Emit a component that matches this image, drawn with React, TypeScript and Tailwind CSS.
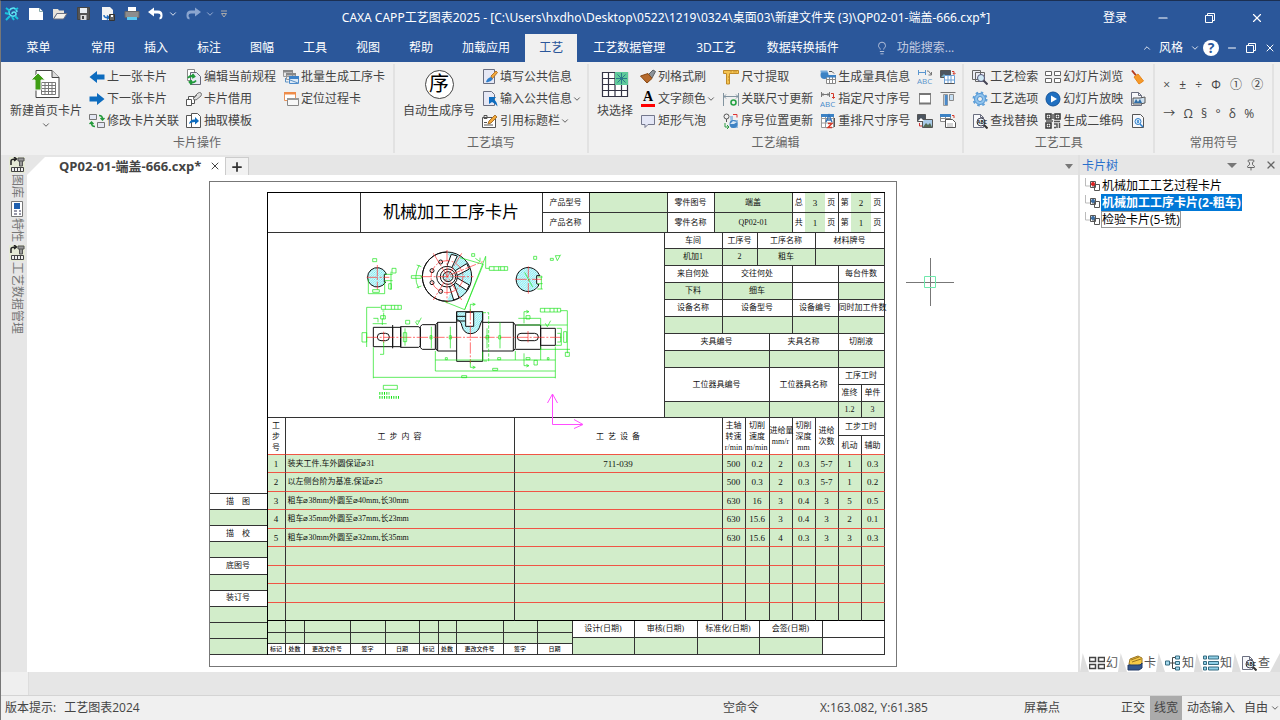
import type { ReactNode } from "react";
import { ChevronDown, ChevronUp, Lightbulb, Minus, Pin, Plus, X } from "lucide-react";

type IconProps = { children: ReactNode; size?: string; box?: string };

function Icon({ children, size = "size-4", box = "0 0 16 16" }: IconProps) {
  return (
    <svg className={`${size} shrink-0`} viewBox={box} fill="none" stroke="#555" strokeWidth="1" aria-hidden="true">
      {children}
    </svg>
  );
}

const Page = ({ x = 1, y = 1 }: { x?: number; y?: number }) => (
  <path d={`M${x + 0.5} ${y + 0.5}h7l3 3v10h-10z M${x + 7.5} ${y + 0.5}v3h3`} fill="#f7f8fb" stroke="#6b6f80" />
);

const Restore = () => (
  <Icon size="size-3" box="0 0 12 12">
    <path d="M1.5 3.5h7v7h-7z M3.5 3.5v-2h7v7h-2" stroke="#fff" />
  </Icon>
);

const icons = {
  left: <Icon><path d="M.5 8 8 2v3.5h7.5v5H8V14z" fill="#0d6cbf" stroke="none" /></Icon>,
  right: <Icon><path d="M15.500 8 8 2v3.500H.5v5H8V14z" fill="#0d6cbf" stroke="none" /></Icon>,
  link: (
    <Icon>
      <path d="M.5 1.500h7v5h-7z M8.500 9.500h7v5h-7z" fill="#e4e7f3" stroke="#777" />
      <path d="M10 2.500q3.500 0 3.500 3.500M11.500 5l2 2 2-2M6 13.500Q2.500 13.500 2.500 10M.5 11l2-2 2 2" stroke="#249a3c" strokeWidth="1.500" />
    </Icon>
  ),
  edit: (
    <Icon>
      <path d="M1.500.5h7v11h-7z" fill="#fff" stroke="#888" />
      <path d="M4.500 3.500h6l4 4v8h-10z" fill="#e8eaf4" stroke="#667" />
      <path d="M2 9q2-3 6-1.500M6.500 5 8.500 7.500 6 9M10 11.500q-2 3-6 1.500M5.500 15.500 3.500 13 6 11.500" stroke="#1f9a3a" strokeWidth="1.800" />
    </Icon>
  ),
  borrow: (
    <Icon>
      <path d="M.5 8.500h5v6h-5z M2.500 8V5.500h6v7H6" fill="#fff" />
      <path d="m7 7 5-5q2-1 3 0t0 3l-5 4-3-1 4-4" fill="#ddd" stroke="#777" />
    </Icon>
  ),
  extract: (
    <Icon>
      <path d="M.5 2.500h7v12h-7z" fill="#fff" />
      <path d="M5.500.5h6l3 3v11h-9z" fill="#fff" />
      <path d="M3 11q1-5 6-4.500V4l4 4-4 3.500V9Q5 9 3 11z" fill="#0d6cbf" stroke="none" />
    </Icon>
  ),
  batch: (
    <Icon>
      <path d="M.5 1.500h9v6h-9z M3.500 4.500h9v6h-9z" fill="#e8e8e8" stroke="#999" />
      <path d="M0 1h10v2.500H0z M3 4h10v2.500H3z" fill="#888" stroke="none" />
      <path d="M6.500 7.500h9v7h-9z" fill="#dce9f6" stroke="#4f8ccb" />
      <path d="M6 7h10v3H6z" fill="#3d82c8" stroke="none" />
      <path d="M7 11 15 14M2.500 9v4h3" stroke="#5c92c4" />
    </Icon>
  ),
  locate: (
    <Icon>
      <path d="M1.500 1.500h11v8h-11z" fill="#fff" stroke="#e8925a" />
      <path d="M1 1h12v2.500H1z" fill="#ee8c4a" stroke="none" />
      <path d="M4.500 7.500h11v7h-11z" fill="#f8f8f8" stroke="#888" />
      <path d="M4 7h12v2H4z" fill="#999" stroke="none" />
    </Icon>
  ),
  fill: (
    <Icon>
      <path d="M1.500.5h11v14h-11z" fill="#e6e8f5" stroke="#6b6f80" />
      <path d="M9 7 14 2l1.500 1.500L10 10z" fill="#f2a93b" stroke="#b5742b" />
      <path d="M4 13q1-4 5-5l2 2q-3 4-7 3z" fill="#2f7fcc" stroke="none" />
    </Icon>
  ),
  input: (
    <Icon>
      <path d="M1.500.5h8l3 3v11h-11z" fill="#e6e8f5" stroke="#6b6f80" />
      <path d="M7 6h7l-2 2.500q3 2 3.500 7-2.500-3.500-5.500-4.500L7 13z" fill="#0d6cbf" stroke="none" />
    </Icon>
  ),
  quote: (
    <Icon>
      <path d="M.5 4.500h13v10H.5z" fill="#fff" />
      <path d="M2 2.500h3v3H2z M2 12h9M2 9.500h3" />
      <path d="m6 11 1-3 6-6 2 2-6 6z" fill="#f2a93b" stroke="#a87430" />
    </Icon>
  ),
  brush: (
    <Icon>
      <path d="m8 6 5-5 2.500 1.500L12 9z" fill="#8b9299" stroke="#596066" />
      <path d="M.5 7 8 4.500l4 5L7 14z" fill="#b66a2c" stroke="#874712" />
    </Icon>
  ),
  bubble: (
    <Icon><path d="M1.500 2.500h13v9H8l-3 3v-3H1.500z" fill="#e4e7f6" stroke="#73778c" /></Icon>
  ),
  ruler: (
    <Icon>
      <path d="M.5 1.500h15v3h-9v10.500h-3V4.500h-3z" fill="#f5c451" stroke="#c08a28" />
      <path d="M8 2v1.500M11 2v1.500M13 2v1.500M5 8h1M5 11h1" stroke="#c08a28" />
    </Icon>
  ),
  assoc: (
    <Icon>
      <path d="M.5 2v13M15.500 2v13M1 5.500h14M3 3.500l-2 2 2 2M13 3.500l2 2-2 2" stroke="#8294a0" />
      <circle cx="10.500" cy="11.500" r="2.500" stroke="#25a244" strokeWidth="1.600" />
    </Icon>
  ),
  posUpdate: (
    <Icon>
      <circle cx="3.500" cy="3.500" r="2.500" stroke="#555" />
      <path d="M3.500 6v3" />
      <path d="M7 3h3v4h5v8H8z" fill="#9bbfe0" stroke="none" />
      <circle cx="10.500" cy="11" r="4" fill="#3f83c4" stroke="none" />
      <path d="m7 11 3-3 4 1-3 2z" fill="#d5e6f5" stroke="none" />
      <path d="M2 10v4h4M4 12l2 2-2 2" stroke="#2a9d43" />
      <path d="M10 1.500h4v3" stroke="#d33" />
    </Icon>
  ),
  gauge: (
    <Icon>
      <circle cx="4.500" cy="6" r="4" fill="#3c82c4" stroke="none" />
      <path d="M.5 1.500h7v2h-7z" fill="#75aadb" stroke="none" />
      <path d="M6.500 6.500h9v8h-9z M6.500 10.500h9M9.500 6.500v8M12.500 6.500v8" fill="#fff" stroke="#888" />
      <path d="M6 6h10v2.500H6z" fill="#3c82c4" stroke="none" />
      <path d="M9 2.500h3l2 2" />
    </Icon>
  ),
  assign: (
    <Icon>
      <path d="M1.500 1v5M9.500 1v5M2 3.500h7M3.500 2 2 3.500 3.500 5M7.500 2 9 3.500 7.500 5" stroke="#777" />
      <path d="M11 2.500h2.500V7M12 6l1.500 1.500L15 6" stroke="#d43a2a" />
      <text x="0" y="15.500" fontSize="8" fill="#4a8acb" stroke="none">ABC</text>
    </Icon>
  ),
  resort: (
    <Icon>
      <path d="M1.500 1.500h12v13h-12z M1.500 5.500h12M1.500 10h12M5.500 2v12" fill="#fff" stroke="#999" />
      <path d="M1 1h13v3H1z" fill="#3c82c4" stroke="none" />
      <path d="m6 9 3-7 3 7M7 7h4" stroke="#3474b8" strokeWidth="1.400" />
      <path d="M8 10.500h4l-4 4h4" stroke="#d43a2a" strokeWidth="1.400" />
      <path d="M14.500 5v9" stroke="#555" />
    </Icon>
  ),
  abc: (
    <Icon>
      <path d="M1.500 1v5M8.500 1v5M2 3.500h6" stroke="#5b96cf" />
      <path d="M10 2h1.500l3 4M14.500 3v3h-3" stroke="#777" />
      <text x="0" y="15" fontSize="8" fill="#5a94cc" stroke="none">ABC</text>
    </Icon>
  ),
  frame: <Icon><path d="M2.500 2.500h11v10h-11z" fill="#fff" stroke="#888" /><path d="M2 2h12v2H2z M2 11.500h12v2H2z" fill="#777" stroke="none" /></Icon>,
  swapA: (
    <Icon>
      <path d="M.5 1.500h10v7H.5z" fill="#4c5560" />
      <path d="M1 8l3-3 3 3z" fill="#7ab" stroke="none" />
      <path d="M4.500 6.500h10v8h-10z M4.500 11h10M8 6.500v8M11 6.500v8" fill="#fff" stroke="#6a9fd6" />
      <path d="M12 2.500h2V5M13 4l1 1.500L15.500 4" stroke="#d43a2a" />
      <path d="M4.500 14.500h10" />
    </Icon>
  ),
  swapB: (
    <Icon>
      <path d="M.5 1.500h8v7h-8z" fill="#4c5560" />
      <path d="M5.500 6.500h10v8h-10z" fill="#a8cbe8" />
      <path d="m6 14 3-4 2 2 2-2 2 4z" fill="#556b55" stroke="none" />
      <path d="M1 8l3-3 3 3z" fill="#fff" stroke="none" />
      <path d="M2.500 10v3H5" stroke="#c33" />
    </Icon>
  ),
  swapC: (
    <Icon>
      <path d="M.5 1.500h10v7H.5z M.5 5.500h10M5.500 2v6" fill="#fff" stroke="#888" />
      <path d="M0 1h11v3H0z" fill="#3c82c4" stroke="none" />
      <path d="M5.500 6.500h7l3 3v5h-10z" fill="#fff" />
      <path d="M7 11h6M7 13h6" stroke="#aaa" />
      <path d="M12 2.500h2V5" stroke="#d43a2a" />
    </Icon>
  ),
  align: (
    <Icon>
      <path d="M.5 1.500h15" stroke="#777" />
      <path d="M3.500 3.500h4v11h-4z" fill="#b9c6d2" stroke="#999" />
      <path d="M5 4h2.500v10H5z" fill="#4a8acb" stroke="none" />
      <path d="M9.500 3.500h4v6h-4z" fill="#c7dff3" stroke="#8b8b8b" />
    </Icon>
  ),
  search: (
    <Icon>
      <path d="M.5 1.500h8v9h-8z M3.500 3.500h9v9h-9z" fill="#eceef6" stroke="#666" />
      <circle cx="9" cy="9" r="3.500" fill="#cfe8f5" stroke="#557" />
      <path d="m11.500 11.500 4 4" stroke="#445" strokeWidth="2" />
    </Icon>
  ),
  gear: (
    <Icon>
      <circle cx="8" cy="8" r="5.500" fill="#8fc3ee" stroke="#4f93d1" />
      <circle cx="8" cy="8" r="6.500" stroke="#5f9fd8" strokeWidth="2" strokeDasharray="2.500 2.600" />
      <circle cx="8" cy="8" r="2.500" fill="#f0f0f0" stroke="#4f93d1" />
    </Icon>
  ),
  find: (
    <Icon>
      <Page />
      <circle cx="9" cy="9" r="4" fill="#eaf3f8" stroke="#445" />
      <text x="5" y="11" fontSize="5" fontWeight="bold" fill="#222" stroke="none">ABC</text>
      <path d="m12 12 3.500 3.500" stroke="#333" strokeWidth="2" />
    </Icon>
  ),
  tiles: <Icon><path d="M.5 2.500h6v4h-6z M9.500 2.500h6v4h-6z M.5 9.500h6v4h-6z M9.500 9.500h6v4h-6z" fill="#fff" stroke="#666" /></Icon>,
  play: <Icon><circle cx="8" cy="8" r="7" fill="#1f6fc0" stroke="#13539a" /><path d="m6 4.500 6 3.500-6 3.500z" fill="#fff" stroke="none" /></Icon>,
  qr: (
    <Icon>
      <path d="M1 1h5v5H1z M10 1h5v5h-5z M1 10h5v5H1z" stroke="#333" strokeWidth="1.500" />
      <path d="M3 3h1v1H3z M12 3h1v1h-1z M3 12h1v1H3z" stroke="#333" />
      <path d="M8 1v5M8 8H1M9 8.500h6M9 11h3v4M14.500 10v5M9 14.500h2" stroke="#555" strokeWidth="1.500" />
    </Icon>
  ),
  broom: (
    <Icon>
      <path d="m2 1.500 4 5" stroke="#b33a1e" strokeWidth="2" />
      <path d="m4 8 4-3 5.500 7-4.500 3z" fill="#f59a2a" stroke="#e8861a" />
    </Icon>
  ),
  pageImg: (
    <Icon>
      <Page x={1} y={1} />
      <path d="M3 7h7l5-1v6l-5 1H3z" fill="#cfe0ee" stroke="#555" />
      <path d="m4 12 2-4 2 3 2-3 2 4z" fill="#2f6ea8" stroke="none" />
    </Icon>
  ),
  pageFind: (
    <Icon>
      <path d="M2.500 1.500h8l3 3v10h-11z" fill="#f7f8fb" />
      <circle cx="8" cy="8.500" r="3" fill="#dcecf8" stroke="#2f7fcc" />
      <path d="M8 7v3M10 11l3 3" stroke="#2f7fcc" strokeWidth="1.500" />
    </Icon>
  ),
};

const fontColor = (
  <span className="flex size-4 shrink-0 flex-col items-center justify-end">
    <span className="font-['Liberation_Serif',serif] text-[14px] leading-3 font-bold text-black">A</span>
    <span className="mt-px h-[3px] w-3.5 bg-[#f00]" />
  </span>
);

function Tool({ icon, label, menu }: { icon: ReactNode; label: string; menu?: boolean }) {
  return (
    <button className="flex h-[22px] items-center whitespace-nowrap">
      {icon}
      <span className="pl-0.5">{label}</span>
      {menu && <ChevronDown className="size-2.5 shrink-0" />}
    </button>
  );
}

function IconTool({ icon, label }: { icon: ReactNode; label: string }) {
  return (
    <button className="flex h-[22px] items-center" aria-label={label}>
      {icon}
    </button>
  );
}

function Group({ label, pad = "px-2", children }: { label: string; pad?: string; children: ReactNode }) {
  return (
    <section className="my-0.5 flex flex-col border-r-2 border-[#e2e2e2] pt-0.5">
      <div className={`flex h-[66px] shrink-0 items-start gap-[7px] ${pad}`}>{children}</div>
      <h2 className="text-center leading-[22px] text-[#666]">{label}</h2>
    </section>
  );
}

const Col = ({ children }: { children: ReactNode }) => <div className="flex flex-col items-start">{children}</div>;

function BigTool({ icon, label, menu }: { icon: ReactNode; label: string; menu?: boolean }) {
  return (
    <button className="flex flex-col items-center whitespace-nowrap">
      <span className="flex h-9 items-center">{icon}</span>
      <span className="leading-[18px]">{label}</span>
      {menu && <ChevronDown className="size-2.5" />}
    </button>
  );
}

function QuickAccess() {
  return (
    <div className="flex items-center gap-2 pl-[3px]">
      <Icon>
        <path d="M8 8a2 2 0 1 1 2 2 4 4 0 1 1 3-4" stroke="#5fe6f5" strokeWidth="1.500" />
        <path d="M2 2 6 5M1 7l4 1M2 14l4-4M14 2l-3 2M10 14l-2-3M14 13l-3-3" stroke="#19c3dc" strokeWidth="2" />
      </Icon>
      <button aria-label="新建"><Icon><path d="M1 2h10.500L15 5.500V14H1z" fill="#fff" stroke="none" /><path d="M11.500 2v3.500H15" stroke="#8aa" /></Icon></button>
      <button aria-label="打开"><Icon><path d="M1 3h5l1 1.500h5V7H5l-4 6z" fill="#e7e3da" stroke="none" /><path d="M5 7.500h10L11.500 13H1.500z" fill="#f4f1ea" stroke="#6a7080" /></Icon></button>
      <button aria-label="保存"><Icon><path d="M1.500 1.500h12v12h-12z" fill="#555" stroke="#444" /><path d="M4 2h7v5H4z" fill="#e9eef2" stroke="none" /><path d="M4.500 9h6v5h-6z" fill="#ddd" stroke="none" /><path d="M6 10h2v3H6z" fill="#444" stroke="none" /></Icon></button>
      <button aria-label="另存为"><Icon><path d="M2 1h8l3 3v10H2z" fill="#f3f3f3" stroke="none" /><path d="M4 9q0 3 4 2.500M7 9.500l2 2-2 2" stroke="#1f6cbf" strokeWidth="1.500" /><path d="M9.500 8.500h5v6h-5z" fill="#666" stroke="#333" /><path d="M11 9h2v2h-2z" fill="#fff" stroke="none" /></Icon></button>
      <button aria-label="打印"><Icon><path d="M4 1h8v5H4z" fill="#fff" stroke="none" /><path d="M1 5.500h14v6H1z" fill="#8d8d8d" stroke="#666" /><path d="M3 11h10v3H3z" fill="#5cc8ee" stroke="none" /></Icon></button>
      <button aria-label="撤销"><Icon><path d="M0 6 6 1.500v3h4q4.500 0 4.500 4.500v1q0 3-3 3.500v-2q1-.5 1-2 0-2-2.500-2H6v3z" fill="#fff" stroke="none" /></Icon></button>
      <button aria-label="撤销列表" className="-ml-1"><ChevronDown className="size-2.5 text-white" /></button>
      <button aria-label="重做" className="-ml-px"><Icon><path d="M16 6l-6-4.500v3H6Q1.500 4.500 1.500 9v1q0 3 3 3.500v-2q-1-.5-1-2 0-2 2.500-2h4v3z" fill="#8ba5cf" stroke="none" /></Icon></button>
      <button aria-label="重做列表" className="-ml-1"><ChevronDown className="size-2.5 text-[#aabbdc]" /></button>
      <button aria-label="自定义" className="-ml-1"><Icon size="size-2.5" box="0 0 10 10"><path d="M2 2h6" stroke="#aaa" /><path d="M2.500 4.500h5L5 8z" stroke="#aaa" /></Icon></button>
    </div>
  );
}

function TitleBar() {
  return (
    <header className="flex h-[33px] items-center bg-[#2b579a] text-white">
      <div className="w-[240px] self-start pt-[5px]"><QuickAccess /></div>
      <h1 className="flex-1 text-center font-['Noto_Sans','Noto_Sans_CJK_SC',sans-serif] whitespace-nowrap">
        CAXA CAPP工艺图表2025 - [C:\Users\hxdho\Desktop\0522\1219\0324\桌面03\新建文件夹 (3)\QP02-01-端盖-666.cxp*]
      </h1>
      <button className="mx-3 w-6 whitespace-nowrap">登录</button>
      <button aria-label="最小化" className="flex w-[47px] justify-center"><Minus className="size-3.5" strokeWidth={2} /></button>
      <button aria-label="还原" className="flex w-[47px] justify-center"><Restore /></button>
      <button aria-label="关闭" className="flex w-[47px] justify-center"><X className="size-3.5" strokeWidth={2} /></button>
    </header>
  );
}

const tabs = [
  { label: "常用" },
  { label: "插入" },
  { label: "标注" },
  { label: "图幅" },
  { label: "工具" },
  { label: "视图" },
  { label: "帮助" },
  { label: "加载应用" },
  { label: "工艺", active: true },
  { label: "工艺数据管理", wide: true },
  { label: "3D工艺", wide: true },
  { label: "数据转换插件", wide: true },
];

function MenuBar() {
  return (
    <nav className="flex h-7 items-stretch gap-px bg-[#2b579a] text-white">
      <button className="w-[75px]">菜单</button>
      {tabs.map((tab) => (
        <button
          key={tab.label}
          className={`whitespace-nowrap ${tab.wide ? "px-[15px]" : "px-3.5"} ${tab.active ? "bg-[#f0f0f0] text-[#2b579a]" : ""}`}
        >
          {tab.label}
        </button>
      ))}
      <label className="ml-5 flex flex-1 items-center gap-2">
        <Lightbulb className="size-3.5 text-[#c3cbe0]" strokeWidth={1.5} />
        <input className="w-24 outline-none placeholder:text-[#c3cbe0]" placeholder="功能搜索..." aria-label="功能搜索" />
      </label>
      <div className="flex items-center gap-[7px] pr-1">
        <ChevronUp className="size-2.5" />
        <button className="flex items-center gap-[7px]">风格 <ChevronDown className="size-2.5" /></button>
        <button aria-label="帮助" className="-ml-1 size-4 rounded-full bg-white text-[14px] leading-4 font-bold text-[#2b579a]">?</button>
        <button aria-label="最小化文档"><Minus className="size-3" /></button>
        <button aria-label="还原文档"><Restore /></button>
        <button aria-label="关闭文档"><X className="size-3" /></button>
      </div>
    </nav>
  );
}

const symbolRows = [
  { width: "w-full", symbols: ["×", "±", "÷", "Φ", "①", "②"] },
  { width: "w-[91px]", symbols: ["→", "Ω", "§", "°", "δ", "%"] },
];

function Ribbon() {
  return (
    <div className="flex h-[93px] bg-[#f0f0f0] text-[#444]">
      <Group label="卡片操作" pad="pl-[9px] pr-2">
        <BigTool
          menu
          label="新建首页卡片"
          icon={
            <Icon size="size-8" box="0 0 32 32">
              <path d="M6 2.500h16l7 7v20H6z" fill="#fff" stroke="#444" />
              <path d="M22 2.500v7h7" fill="#ddd" stroke="#444" />
              <path d="M11.500 14.500h14v12h-14z M11.500 17.500h14M11.500 20.500h14M11.500 23.500h14M15 14.500v12M18.500 14.500v12M22 14.500v12" stroke="#777" />
              <path d="m8 5 7 7h-4v10H5V12H1z" fill="#3f9e14" stroke="#f0f0f0" />
            </Icon>
          }
        />
        <Col>
          <Tool icon={icons.left} label="上一张卡片" />
          <Tool icon={icons.right} label="下一张卡片" />
          <Tool icon={icons.link} label="修改卡片关联" />
        </Col>
        <Col>
          <Tool icon={icons.edit} label="编辑当前规程" />
          <Tool icon={icons.borrow} label="卡片借用" />
          <Tool icon={icons.extract} label="抽取模板" />
        </Col>
        <Col>
          <Tool icon={icons.batch} label="批量生成工序卡" />
          <Tool icon={icons.locate} label="定位过程卡" />
        </Col>
      </Group>
      <Group label="工艺填写" pad="pl-2 pr-[5px]">
        <BigTool
          label="自动生成序号"
          icon={<span className="flex size-[29px] items-center justify-center rounded-full border border-[#444] bg-white text-[20px] leading-none text-black">序</span>}
        />
        <Col>
          <Tool icon={icons.fill} label="填写公共信息" />
          <Tool icon={icons.input} label="输入公共信息" menu />
          <Tool icon={icons.quote} label="引用标题栏" menu />
        </Col>
      </Group>
      <Group label="工艺编辑" pad="pl-2 pr-1.5">
        <BigTool
          label="块选择"
          icon={
            <Icon size="size-7" box="0 0 28 28">
              <path d="M1.500 2.500h25v24h-25z M1.500 8.500h25M1.500 14.500h25M1.500 20.500h25M7.500 2.500v24M14 2.500v24M20.500 2.500v24" fill="#fff" stroke="#334" strokeWidth="1.200" />
              <path d="M14 2h13v13H14z" fill="#5fca9a" stroke="none" />
              <path d="M20.500 3v11M15 8.500h11M16.500 4.500l8 8M24.500 4.500l-8 8" stroke="#2a7a8a" />
            </Icon>
          }
        />
        <Col>
          <Tool icon={icons.brush} label="列格式刷" />
          <Tool icon={fontColor} label="文字颜色" menu />
          <Tool icon={icons.bubble} label="矩形气泡" />
        </Col>
        <Col>
          <Tool icon={icons.ruler} label="尺寸提取" />
          <Tool icon={icons.assoc} label="关联尺寸更新" />
          <Tool icon={icons.posUpdate} label="序号位置更新" />
        </Col>
        <Col>
          <Tool icon={icons.gauge} label="生成量具信息" />
          <Tool icon={icons.assign} label="指定尺寸序号" />
          <Tool icon={icons.resort} label="重排尺寸序号" />
        </Col>
        <Col>
          <IconTool icon={icons.abc} label="尺寸编号" />
          <IconTool icon={icons.frame} label="边框" />
          <IconTool icon={icons.swapB} label="替换图片" />
        </Col>
        <Col>
          <IconTool icon={icons.swapA} label="图片转表格" />
          <IconTool icon={icons.align} label="顶端对齐" />
          <IconTool icon={icons.swapC} label="表格转换" />
        </Col>
      </Group>
      <Group label="工艺工具" pad="pl-2 pr-[7px]">
        <Col>
          <Tool icon={icons.search} label="工艺检索" />
          <Tool icon={icons.gear} label="工艺选项" />
          <Tool icon={icons.find} label="查找替换" />
        </Col>
        <Col>
          <Tool icon={icons.tiles} label="幻灯片浏览" />
          <Tool icon={icons.play} label="幻灯片放映" />
          <Tool icon={icons.qr} label="生成二维码" />
        </Col>
        <Col>
          <IconTool icon={icons.broom} label="清理" />
          <IconTool icon={icons.pageImg} label="图片页" />
          <IconTool icon={icons.pageFind} label="页面预览" />
        </Col>
      </Group>
      <Group label="常用符号" pad="pl-2 pr-[9px]">
        <div className="flex w-[100px] flex-col pt-1">
          {symbolRows.map((row) => (
            <div key={row.width} className={`flex h-[29px] items-center justify-between ${row.width}`}>
              {row.symbols.map((s) => <button key={s}>{s}</button>)}
            </div>
          ))}
        </div>
      </Group>
    </div>
  );
}

const libraryIcon = (
  <Icon>
    <path d="M0 0h16v16H0z" fill="#e6ead6" stroke="none" />
    <path d="M2 8V4q0-2 5-2M5 0l2.500 2L5 4" stroke="#222" strokeWidth="1.500" />
    <path d="M9 1h6v3H9z M10.500 4v5h3V4" fill="#999" stroke="#555" />
    <path d="M2.500 10.500h12v4h-12z M5.500 11v4M8.500 11v4M11.500 11v4" fill="#eee" stroke="#444" />
  </Icon>
);

const propsIcon = (
  <Icon>
    <path d="M2.500.5h11v15h-11z" fill="#fff" stroke="#777" />
    <path d="M5 2h6v6H5z" fill="#1f5fae" stroke="none" />
    <path d="M5 10h3M10 10h2M5 13h3M10 13h2" stroke="#99a" strokeWidth="2" />
  </Icon>
);

const dockItems = [
  { label: "图库", icon: libraryIcon },
  { label: "特性", icon: propsIcon },
  { label: "工艺数据管理", icon: libraryIcon },
];

function SideDock() {
  return (
    <aside className="flex w-[26px] shrink-0 flex-col items-end gap-[3px] pt-0.5 pr-0.5 text-[#777]">
      {dockItems.map((item) => (
        <button key={item.label} className="flex flex-col items-center gap-px">
          {item.icon}
          <span className="leading-4 [text-orientation:sideways] [writing-mode:vertical-rl]">{item.label}</span>
        </button>
      ))}
    </aside>
  );
}

type Cell = { t?: string; c?: number; r?: number; g?: boolean };

const cellBase = "border-r border-b border-[#333] p-0 text-center whitespace-pre";

function Row({ cells, className = "" }: { cells: Cell[]; className?: string }) {
  return (
    <tr className={className}>
      {cells.map((cell, i) => (
        <td key={i} colSpan={cell.c} rowSpan={cell.r} className={`${cellBase} ${cell.g ? "bg-[#d2edca]" : "bg-white"}`}>
          {cell.t}
        </td>
      ))}
    </tr>
  );
}

function PageCount({ left, value }: { left: string; value: string }) {
  return (
    <td className={cellBase}>
      <div className="flex h-[19px] items-center">
        <span className="flex-1">{left}</span>
        <span className="flex h-full w-5 items-center justify-center bg-[#d2edca] text-[9px]">{value}</span>
        <span className="flex-1">页</span>
      </div>
    </td>
  );
}

function CardHead() {
  return (
    <table className="w-full table-fixed border-separate border-spacing-0">
      <colgroup>
        <col className="w-[93px]" /><col className="w-[182px]" /><col className="w-[47px]" /><col className="w-[78px]" />
        <col className="w-[47px]" /><col className="w-[78px]" /><col className="w-[46px]" /><col className="w-[46px]" />
      </colgroup>
      <tbody>
        <tr className="h-5">
          <td rowSpan={2} className={cellBase} />
          <td rowSpan={2} className={`${cellBase} text-[17px] text-black`}>机械加工工序卡片</td>
          <td className={cellBase}>产品型号</td>
          <td className={`${cellBase} bg-[#d2edca]`} />
          <td className={cellBase}>零件图号</td>
          <td className={`${cellBase} bg-[#d2edca]`}>端盖</td>
          <PageCount left="总" value="3" />
          <PageCount left="第" value="2" />
        </tr>
        <tr className="h-5">
          <td className={cellBase}>产品名称</td>
          <td className={`${cellBase} bg-[#d2edca]`} />
          <td className={cellBase}>零件名称</td>
          <td className={`${cellBase} bg-[#d2edca]`}>QP02-01</td>
          <PageCount left="共" value="1" />
          <PageCount left="第" value="1" />
        </tr>
      </tbody>
    </table>
  );
}

const processRows: Cell[][] = [
  [{ t: "车间" }, { t: "工序号" }, { t: "工序名称", c: 3 }, { t: "材料牌号", c: 3 }],
  [{ t: "机加1", g: true }, { t: "2", g: true }, { t: "粗车", c: 3, g: true }, { c: 3, g: true }],
  [{ t: "来自何处" }, { t: "交往何处", c: 3 }, { c: 2 }, { t: "每台件数", c: 2 }],
  [{ t: "下料", g: true }, { t: "细车", c: 3, g: true }, { c: 2 }, { c: 2, g: true }],
  [{ t: "设备名称" }, { t: "设备型号", c: 3 }, { t: "设备编号", c: 2 }, { t: "同时加工件数", c: 2 }],
  [{ g: true }, { c: 3, g: true }, { c: 2, g: true }, { c: 2, g: true }],
  [{ t: "夹具编号", c: 3 }, { t: "夹具名称", c: 3 }, { t: "切削液", c: 2 }],
  [{ c: 3, g: true }, { c: 3, g: true }, { c: 2, g: true }],
  [{ t: "工位器具编号", c: 3, r: 2 }, { t: "工位器具名称", c: 3, r: 2 }, { t: "工序工时", c: 2 }],
  [{ t: "准终" }, { t: "单件" }],
  [{ c: 3, g: true }, { c: 3, g: true }, { t: "1.2", g: true }, { t: "3", g: true }],
];

function ProcessInfo() {
  return (
    <table className="w-[220px] shrink-0 table-fixed border-separate border-spacing-0">
      <colgroup>
        <col className="w-[58px]" /><col className="w-[35px]" /><col className="w-[12px]" /><col className="w-[23px]" />
        <col className="w-[23px]" /><col className="w-[23px]" /><col className="w-[23px]" /><col className="w-[23px]" />
      </colgroup>
      <tbody>
        {processRows.map((cells, i) => (
          <Row key={i} cells={cells} className="h-[17px] first:h-4 last:h-4" />
        ))}
      </tbody>
    </table>
  );
}

// Units in the drawing are thirds of a screen pixel.
function ShaftDrawing() {
  return (
    <svg className="h-[184px] w-full" viewBox="-246 144 1188 552" fill="none" strokeWidth="3">
      <defs>
        <pattern id="hatch" width="7" height="7" patternUnits="userSpaceOnUse">
          <path d="M0 0h7v7H0z" fill="#d4fafc" />
          <path d="M0 7 7 0" stroke="#5fdfe8" strokeWidth="2" />
        </pattern>
      </defs>

      <g stroke="#111" fill="url(#hatch)">
        <path d="M107 263A29 29 0 1 0 107 291L103 291V268H109z" />
        <path d="M567 268A36 36 0 1 0 567 299L560 296V272H570z" />
        <path d="M291 201A74 74 0 0 1 291 349L320 275z" stroke="none" />
        <path d="M320 380H398V404Q392 412 388 428Q380 446 361 446Q342 446 336 424Q333 406 320 404z" />
        <path d="M347 382H371V424H347z" fill="#fff" />
      </g>

      <g stroke="#111" fill="#fff">
        <path d="m304 208 18 5-20 42-14-5z M350 236l8 16-38 20-6-14z M358 300l-8 16-36-24 6-14z M327 339l-16 6-14-46 14-5z" />
        <path d="M291 201A74 74 0 0 0 291 349" />
        <circle cx="291" cy="275" r="74" fill="none" />
        <circle cx="291" cy="275" r="31" />
        <circle cx="294" cy="275" r="23" />
        <circle cx="294" cy="275" r="15" fill="url(#hatch)" />
        <circle cx="272" cy="231" r="6" /><circle cx="246" cy="257" r="6" />
        <circle cx="246" cy="293" r="6" /><circle cx="272" cy="319" r="6" />
      </g>

      <g stroke="#111">
        <path d="M70 427H128V485H70z M128 420V490M128 427H152V485H128M152 425H206L211 431V482L206 487H152z" />
        <path d="M211 424 217 419H256V493H217L211 488z M258 418 263 412H320M258 492 263 498H320M258 418V492M263 412V498" />
        <path d="M320 380V529H398V380M398 412H490L496 420V490L490 498H398M496 420H572V493H496M490 412V498M572 430H616V481H572z" />
        <path d="M93 445H107A11 11 0 0 1 107 467H93A11 11 0 0 1 93 445z M513 445H554A11 11 0 0 1 554 467H513A11 11 0 0 1 513 445z" />
        <path d="M320 394H346M320 408H346M152 425V487" />
      </g>

      <g stroke="#ff2a2a" strokeWidth="2" strokeDasharray="34 5 6 5">
        <path d="M50 457H640M361 372V535M82 240V314M50 277H118M535 244V326M496 283H575" />
        <path d="M291 195V355M212 275H370M250 205 335 345M335 205 250 345M300 270 398 230" />
        <circle cx="291" cy="275" r="48" />
        <path d="M101 440V474M534 438V476" />
      </g>

      <g stroke="#12e212" strokeWidth="2">
        <path d="M50 367H92M50 367V486M36 443H50V471H36z M94 361H154V373H94z M106 361V373M124 361V373M134 361V373M144 361V373" />
        <path d="M70 400H84M84 400V412M97 400V420M68 416H110M101 383V402M97 378h6M101 470V508H90M92 392h14v10H92z" />
        <path d="M167 406H179V417H167z M165 430V482M160 443H170V470H160z M196 410l6 10 12-22M198 408H208" />
        <path d="M244 425V490M301 425V490M240 452H246V462H240z M298 452H304V462H298z M411 430V490M450 412V490M408 452H416V462H408z M446 452H452V462H446z" />
        <path d="M398 383H416V528H398" strokeDasharray="10 4" />
        <path d="M256 498V558H616M616 485V580M70 487V580M70 577H616M256 525H498M398 500V525M496 498V525M572 485V525M498 525H616" />
        <path d="M335 572H350V578H335z M428 550H443V556H428z M286 518H292V524H286z M443 518H452V524H443z M528 518H540V524H528z M592 518H597V524H592z" />
        <path d="M361 378V358H374M368 354l8 4-8 4M361 530V547H374M368 543l8 4-8 4" />
        <path d="M522 415V380H535M529 376l8 4-8 4M522 505V542H535M529 538l8 4-8 4M505 400H572V418M502 420H652M528 392h12v10h-12z" />
        <path d="M571 370H632V381H571z M584 370V381M600 370V381M612 370V381M622 370V381M632 377H652V505M641 440H650V472H641zM620 430H634V481H616M622 445h10v26h-10" />
        <path d="M572 493H660M646 502H658V514H646z M586 415l6 10 10-18M552 526h10v14h-10z" />
        <path d="M68 221H80V230H68z M104 268H128M104 287H128M123 260V315M116 296H124V312H116z M126 250h12v14h-12zM55 282V326H104V290M68 314H88V322H68z" />
        <path d="M208 240Q188 276 206 310M184 272H214V280H184zM200 240l14 5M200 308l14-5M365 206H374V214H365z M376 220l14 10V218" />
        <path d="M330 218 400 238 344 374 284 350M407 214V250H418M344 374 407 214M418 245H473V256H418z M432 245V256M446 245V256M452 245V256M463 245V256" />
        <path d="M551 214H560V223H551z M601 220H610V226H601z M616 212l6 15 10-18M616 212H630M563 276H578M563 296H578M574 272V312M562 312H578M524 262 548 306" />
        <path d="M100 601H142V613H100z" />
      </g>
      <g stroke="#12e212">
        <path d="M88 625H118" strokeWidth="8" strokeDasharray="3 4" />
        <path d="M88 637H150" strokeWidth="8" strokeDasharray="3 4" />
      </g>
    </svg>
  );
}

const stepHeads = ["主轴\n转速\nr/min", "切削\n速度\nm/min", "进给量\nmm/r", "切削\n深度\nmm", "进给\n次数"];

const steps = [
  ["1", "装夹工件,车外圆保证⌀31", "711-039", "500", "0.2", "2", "0.3", "5-7", "1", "0.3"],
  ["2", "以左侧台阶为基准,保证⌀25", "", "500", "0.3", "2", "0.3", "5-7", "1", "0.2"],
  ["3", "粗车⌀38mm外圆至⌀40mm,长30mm", "", "630", "16", "3", "0.4", "3", "5", "0.5"],
  ["4", "粗车⌀35mm外圆至⌀37mm,长23mm", "", "630", "15.6", "3", "0.4", "3", "2", "0.1"],
  ["5", "粗车⌀30mm外圆至⌀32mm,长35mm", "", "630", "15.6", "4", "0.3", "3", "3", "0.3"],
  ...Array.from({ length: 4 }, () => Array<string>(10).fill("")),
];

function StepTable() {
  const head = "border-r border-b border-r-[#333] border-b-[#f05545] p-0 text-center font-normal leading-[11px] whitespace-pre";
  return (
    <table className="w-full table-fixed border-separate border-spacing-0">
      <colgroup>
        <col className="w-[18px]" /><col className="w-[229px]" /><col className="w-[208px]" /><col className="w-[23px]" /><col className="w-[24px]" />
        <col className="w-[23px]" /><col className="w-[23px]" /><col className="w-[23px]" /><col className="w-[23px]" /><col className="w-[23px]" />
      </colgroup>
      <thead>
        <tr className="h-[18px]">
          <th rowSpan={2} className={head}>{"工\n步\n号"}</th>
          <th rowSpan={2} className={head}>工  步  内  容</th>
          <th rowSpan={2} className={head}>工  艺  设  备</th>
          {stepHeads.map((h) => <th key={h} rowSpan={2} className={head}>{h}</th>)}
          <th colSpan={2} className={`${cellBase} font-normal`}>工步工时</th>
        </tr>
        <tr className="h-[19px]">
          <th className={head}>机动</th>
          <th className={head}>辅助</th>
        </tr>
      </thead>
      <tbody className="bg-[#d2edca]">
        {steps.map((step, i) => (
          <tr key={i} className="odd:h-[18px] even:h-[19px]">
            {step.map((value, j) => (
              <td
                key={j}
                className={`border-r border-b border-r-[#333] p-0 whitespace-nowrap ${i === steps.length - 1 ? "border-b-black" : "border-b-[#f05545]"} ${j === 1 ? "pl-0.5 text-left" : "text-center text-[9px]"}`}
              >
                {value}
              </td>
            ))}
          </tr>
        ))}
      </tbody>
    </table>
  );
}

const changeLabels = ["标记", "处数", "更改文件号", "签字", "日期"];
const blankChange: Cell[] = Array.from({ length: 10 }, () => ({ g: true }));
const signLabels = ["设计(日期)", "审核(日期)", "标准化(日期)", "会签(日期)", ""];

function CardFoot() {
  return (
    <div className="flex">
      <table className="w-[305px] shrink-0 table-fixed border-separate border-spacing-0 text-[6px] font-medium">
        <colgroup>
          <col className="w-[18px]" /><col className="w-[19px]" /><col className="w-[46px]" /><col className="w-[35px]" /><col className="w-[34px]" />
          <col className="w-[19px]" /><col className="w-[18px]" /><col className="w-[47px]" /><col className="w-[34px]" /><col className="w-[35px]" />
        </colgroup>
        <tbody>
          <Row className="h-3" cells={blankChange} />
          <Row className="h-[11px]" cells={blankChange} />
          <Row className="h-[11px]" cells={[...changeLabels, ...changeLabels].map((t) => ({ t }))} />
        </tbody>
      </table>
      <table className="w-[312px] table-fixed border-separate border-spacing-0">
        <colgroup>
          <col className="w-[62px]" /><col className="w-[63px]" /><col className="w-[62px]" /><col className="w-[63px]" /><col className="w-[62px]" />
        </colgroup>
        <tbody>
          <Row className="h-[17px]" cells={signLabels.map((t) => ({ t }))} />
          <Row className="h-[17px]" cells={signLabels.map((t) => ({ g: t !== "" }))} />
        </tbody>
      </table>
    </div>
  );
}

const archiveLabels = ["描    图", "", "描    校", "", "底图号", "", "装订号", "", "", ""];

function Sheet() {
  return (
    <div className="relative mx-auto mt-1.5 flex w-[688px] items-end border border-[#777] pt-2.5 pb-[11px] font-['Liberation_Serif','Noto_Sans_CJK_SC',serif] text-[8px] leading-[10px] text-[#111]">
      <div className="grid h-[162px] w-[57px] grid-rows-10 border-t border-[#333]">
        {archiveLabels.map((label, i) => (
          <div key={i} className={`flex items-center justify-center border-b border-[#333] whitespace-pre ${label ? "" : "bg-[#d2edca]"}`}>
            {label}
          </div>
        ))}
      </div>
      <div className="w-[618px] border-t border-l border-black">
        <CardHead />
        <div className="flex">
          <div className="flex-1 border-r border-b border-[#333]"><ShaftDrawing /></div>
          <ProcessInfo />
        </div>
        <StepTable />
        <CardFoot />
      </div>
      <svg className="absolute top-[210px] left-[342px] h-[40px] w-[34px] overflow-visible" viewBox="0 0 34 40" fill="none" stroke="#ff4dff">
        <path d="M.5 32.500V2M-4.500 11 .5 2l5 9M.5 32.500H30M22 27.500l9 5-9 4" />
      </svg>
    </div>
  );
}

function Canvas() {
  return (
    <main className="flex min-w-0 flex-1 flex-col">
      <div className="flex h-5 items-end pr-1">
        <div className="flex h-[18px] items-center bg-white pr-1 pl-8 text-[13px] font-bold text-[#444] [clip-path:polygon(18px_0,100%_0,100%_100%,0_100%)]">
          <span className="whitespace-nowrap">QP02-01-端盖-666.cxp*</span>
          <button aria-label="关闭标签" className="ml-2"><X className="size-3" /></button>
        </div>
        <button aria-label="新建标签" className="flex h-[18px] w-6 items-center justify-center border border-b-0 border-[#ccc] bg-[#f2f2f2]">
          <Plus className="size-3.5 text-[#333]" strokeWidth={3} />
        </button>
        <button aria-label="标签列表" className="mb-1 ml-auto text-[#666]">
          <Icon size="size-2.5" box="0 0 10 10"><path d="M1 3h8L5 8z" fill="#777" stroke="none" /></Icon>
        </button>
      </div>
      <div className="relative flex-1 overflow-hidden bg-white">
        <Sheet />
        <svg className="absolute top-[83px] left-[879px] size-12" viewBox="0 0 48 48" fill="none">
          <path d="M0 24.500H48M24.500 0V48" stroke="#777" />
          <path d="M18.500 18.500h11v11h-11z" stroke="#6fe8ac" />
        </svg>
      </div>
    </main>
  );
}

const treeItems = [
  { label: "机械加工工艺过程卡片", mark: "#e02020", style: "border-transparent" },
  { label: "机械加工工序卡片(2-粗车)", mark: "#3a6ea5", style: "border-[#0078d7] bg-[#0078d7] font-bold text-white" },
  { label: "检验卡片(5-铣)", mark: "#3a6ea5", style: "border-[#999]" },
];

const panelTabs = [
  { label: "幻", icon: <Icon><path d="M.5 2.500h6v4h-6z M9.500 2.500h6v4h-6z M.5 9.500h6v4h-6z M9.500 9.500h6v4h-6z" stroke="#444" strokeWidth="1.500" /></Icon> },
  { label: "卡", icon: <Icon><path d="m3 4 8-3 4 2v6l-9 3-4-3z" fill="#f6c945" stroke="#9a7420" /><path d="m4 5 8-3M5 7l9-3" stroke="#9a7420" /><path d="M1 10h12l2-2v5l-3 2H1z" fill="#34568b" stroke="#223a66" /></Icon> },
  { label: "知", icon: <Icon><path d="M.5 6h4v4h-4z M10.500 1h4v3h-4z M10.500 6.500h4v3h-4z M10.500 12h4v3h-4z" fill="#a8dbef" stroke="#356b80" /><path d="M5 8h5M7.500 2.500v11M7.500 2.500H10M7.500 13.500H10" stroke="#444" /></Icon> },
  { label: "知", icon: <Icon><path d="M.5 1h3v3h-3z M.5 6.500h3v3h-3z M.5 12h3v3h-3z M5.500 1h10v3h-10z M5.500 6.500h10v3h-10z M5.500 12h10v3h-10z" fill="#8fcfe6" stroke="#356b80" /></Icon> },
  { label: "查", icon: icons.find },
];

function CardTree() {
  return (
    <aside className="flex w-[202px] shrink-0 flex-col border-l-2 border-[#e0e0e0]">
      <div className="flex h-5 items-center gap-2 pr-[3px] pl-0.5 text-[#666]">
        <h2 className="flex-1 pt-0.5 text-[#2a70cc]">卡片树</h2>
        <button aria-label="菜单"><Icon size="size-2.5" box="0 0 10 10"><path d="M0 3h10L5 8z" fill="#777" stroke="none" /></Icon></button>
        <button aria-label="固定"><Pin className="size-3" /></button>
        <button aria-label="关闭面板"><X className="size-3" strokeWidth={2.5} /></button>
      </div>
      <ul className="flex-1 bg-white pt-[2px] text-black">
        {treeItems.map((item) => (
          <li key={item.label} className="flex h-[17px] items-center pl-[5px]">
            <Icon><path d="M.5 0v8H5" stroke="#bbb" /><path d="M5.500 3.500h5v6h-5z M9.500 6.500h5v6h-5z M5.500 6.500h5M8 3.500v6" fill="#fff" stroke="#555" /><circle cx="8" cy="6" r="2" fill={item.mark} stroke="none" /></Icon>
            <a href="#" className={`border whitespace-nowrap leading-[15px] ${item.style}`}>{item.label}</a>
          </li>
        ))}
      </ul>
      <div className="flex h-[19px] bg-white">
        {panelTabs.map((tab, i) => (
          <button key={i} className="flex w-[38px] shrink-0 items-center whitespace-nowrap text-[#555]">
            <span className="h-full w-[9px] shrink-0 bg-[#dedede] [clip-path:polygon(30%_0,100%_100%,0_100%)]" />
            {tab.icon}
            <span className="pl-px">{tab.label}</span>
          </button>
        ))}
        <span className="flex-1 bg-[#dedede] [clip-path:polygon(100%_0,100%_100%,0_100%)]" />
      </div>
    </aside>
  );
}

function StatusBar() {
  return (
    <footer className="flex h-[25px] items-center border-t border-[#d4d4d4] bg-[#f0f0f0] whitespace-nowrap text-[#444]">
      <p className="flex flex-1 gap-2 pl-1"><span>版本提示:</span><span>工艺图表2024</span></p>
      <span className="w-[97px]">空命令</span>
      <span className="w-[204px]">X:163.082, Y:61.385</span>
      <span className="w-[97px]">屏幕点</span>
      <button>正交</button>
      <button className="mx-[5px] h-6 bg-[#ababab] px-1">线宽</button>
      <button className="mr-[9px]">动态输入</button>
      <button className="flex items-center gap-0.5">自由 <ChevronDown className="size-2.5" /></button>
    </footer>
  );
}

export default function App() {
  return (
    <div className="flex h-screen flex-col overflow-hidden border-t border-l border-t-[#1b2f52] border-l-[#777] bg-[#e6e6e6] font-['Open_Sans','Noto_Sans_CJK_SC',sans-serif] text-[12px] leading-4">
      <TitleBar />
      <MenuBar />
      <Ribbon />
      <div className="flex min-h-0 flex-1">
        <SideDock />
        <Canvas />
        <CardTree />
      </div>
      <div className="h-[23px] shrink-0"><div className="h-full w-7 border-r border-[#ddd] bg-[#efefef]" /></div>
      <StatusBar />
    </div>
  );
}
